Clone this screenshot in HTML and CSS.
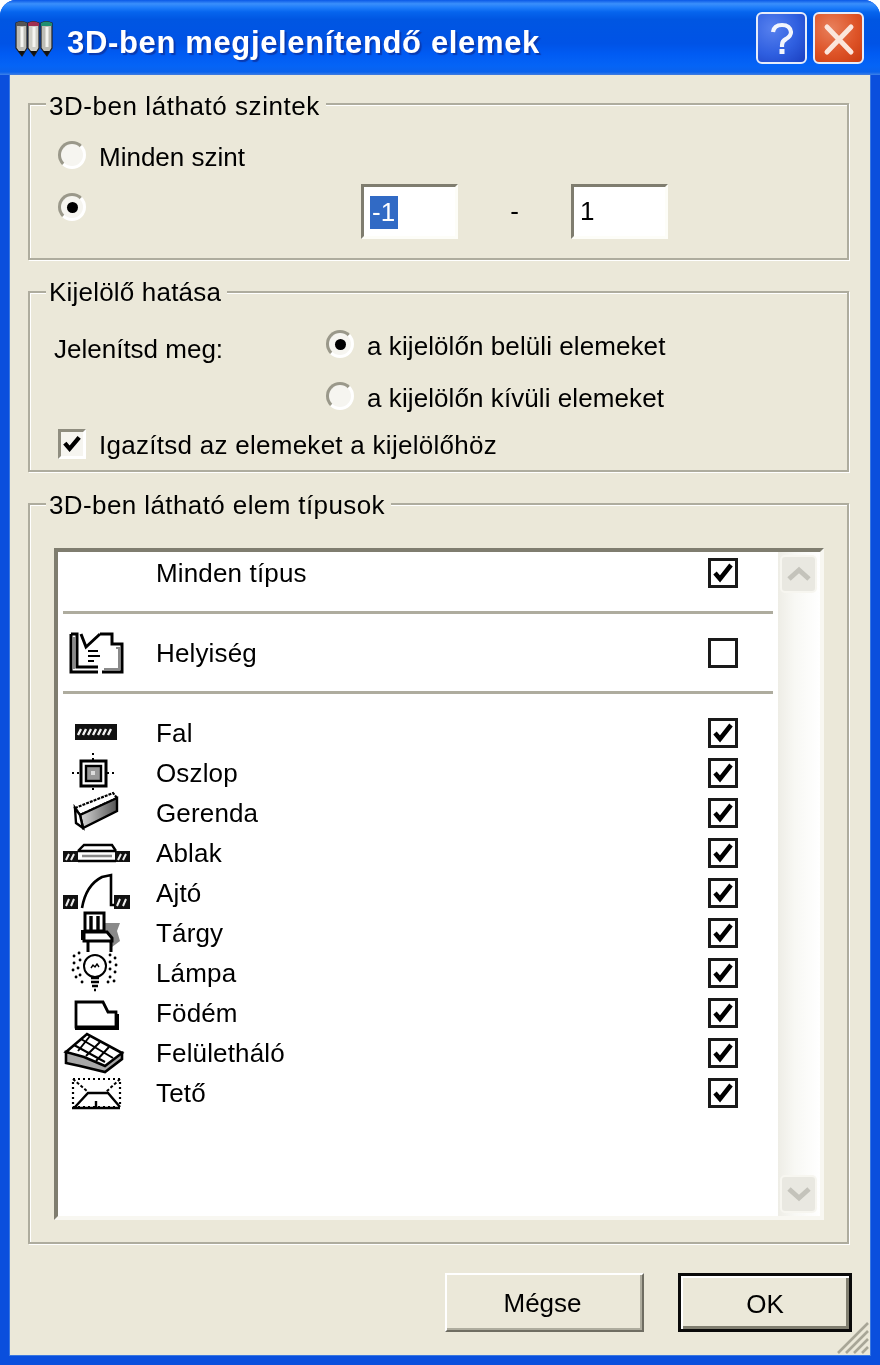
FILE: index.html
```html
<!DOCTYPE html>
<html lang="hu">
<head>
<meta charset="utf-8">
<title>3D-ben megjelenítendő elemek</title>
<link rel="stylesheet" href="styles.css">
</head>
<body>
<div class="window">
  <header class="titlebar">
    <svg class="app-icon" width="38" height="38" viewBox="0 0 38 38">
      <g stroke="#222" stroke-width="1.2">
        <path d="M1 3q5-3 11 0v25l-5 8-6-8z" fill="#bdbdb6"/>
        <path d="M13 3q5-3 11 0v25l-5 8-6-8z" fill="#cfcfc8"/>
        <path d="M26 3q5-3 11 0v25l-5 8-6-8z" fill="#bdbdb6"/>
      </g>
      <path d="M1 3q5-3 11 0v3H1z" fill="#555"/><path d="M13 3q5-3 11 0v3H13z" fill="#a03050"/><path d="M26 3q5-3 11 0v3H26z" fill="#208f70"/>
      <path d="M3 31l4 5 3-5z" fill="#111"/><path d="M15 31l4 5 3-5z" fill="#111"/><path d="M28 31l4 5 3-5z" fill="#111"/>
      <path d="M7 7v20M19 7v20M32 7v20" stroke="#f4f4f0" stroke-width="3"/>
    </svg>
    <h1 class="title">3D-ben megjelenítendő elemek</h1>
    <div class="win-btn help"><svg width="51" height="52" viewBox="0 0 51 52"><path d="M17 20q1-7 9-7t9 7q0 4-5 7-4 2-4 6v2" fill="none" stroke="#f2f5fd" stroke-width="4.2"/><rect x="23.5" y="37" width="5" height="5" fill="#f2f5fd"/></svg></div>
    <div class="win-btn close"><svg width="51" height="52" viewBox="0 0 51 52"><path d="M14 15l24 25M38 15L14 40" stroke="#fbe6dc" stroke-width="5" stroke-linecap="round"/></svg></div>
  </header>
  <main class="client">
    <section class="group g1">
      <div class="legend">3D-ben látható szintek</div>
      <div class="line r1"><span class="radio"></span><span class="label">Minden szint</span></div>
      <div class="line r2">
        <span class="radio on"></span>
        <div class="field f1"><span class="sel">-1</span></div>
        <span class="dash">-</span>
        <div class="field">1</div>
      </div>
    </section>
    <section class="group g2">
      <div class="legend">Kijelölő hatása</div>
      <div class="line k1"><span class="show">Jelenítsd meg:</span><span class="radio on"></span><span class="label">a kijelölőn belüli elemeket</span></div>
      <div class="line k2"><span class="show"></span><span class="radio"></span><span class="label">a kijelölőn kívüli elemeket</span></div>
      <div class="line k3"><span class="sunken-check"><svg width="23" height="23" viewBox="0 0 23 23"><path d="M4 11l5 6L19 5" fill="none" stroke="#000" stroke-width="4.5"/></svg></span><span class="label">Igazítsd az elemeket a kijelölőhöz</span></div>
    </section>
    <section class="group g3">
      <div class="legend">3D-ben látható elem típusok</div>
      <div class="listbox">
        <div class="list">
          <div class="row"><span class="ico"></span><span class="name">Minden típus</span><span class="cb checked"><svg width="24" height="24" viewBox="0 0 24 24"><path d="M4 12l5 6L20 4" fill="none" stroke="#000" stroke-width="4.5"/></svg></span></div>
          <hr class="sep">
          <div class="row"><span class="ico"><svg width="70" height="44" viewBox="0 0 70 44"><path d="M11 3h6v33h21M40 3h12v10h10v28H42M11 3v38h27M21 3l5 13L40 3" fill="none" stroke="#000" stroke-width="3"/><path d="M14 6v32M56 17h3v21H44" fill="none" stroke="#8a8a8a" stroke-width="2"/><path d="M28 20h10M28 25h12M28 30h6" stroke="#000" stroke-width="1.8"/></svg></span><span class="name">Helyiség</span><span class="cb"></span></div>
          <hr class="sep">
          <div class="row"><span class="ico"><svg width="70" height="44" viewBox="0 0 70 44"><rect x="15" y="13" width="42" height="16" fill="#111"/><path d="M18 24l3-6M23 24l3-6M28 24l3-6M33 24l3-6M38 24l3-6M43 24l3-6M48 24l3-6" stroke="#eee" stroke-width="2.4"/></svg></span><span class="name">Fal</span><span class="cb checked"><svg width="24" height="24" viewBox="0 0 24 24"><path d="M4 12l5 6L20 4" fill="none" stroke="#000" stroke-width="4.5"/></svg></span></div>
          <div class="row"><span class="ico"><svg width="70" height="44" viewBox="0 0 70 44"><path d="M12 22h43M33 2v37" stroke="#000" stroke-width="2" stroke-dasharray="2 3"/><rect x="21" y="10" width="25" height="25" fill="#fff" stroke="#000" stroke-width="3"/><rect x="26" y="15" width="15" height="15" fill="#999" stroke="#000" stroke-width="2.4"/><rect x="31" y="20" width="4" height="4" fill="#ddd"/></svg></span><span class="name">Oszlop</span><span class="cb checked"><svg width="24" height="24" viewBox="0 0 24 24"><path d="M4 12l5 6L20 4" fill="none" stroke="#000" stroke-width="4.5"/></svg></span></div>
          <div class="row"><span class="ico"><svg width="70" height="44" viewBox="0 0 70 44"><defs><linearGradient id="beam" x1="0" y1="0" x2="1" y2="0"><stop offset="0" stop-color="#d8d8d8"/><stop offset="1" stop-color="#555"/></linearGradient></defs><path d="M15 17L53 2l4 5-37 17z" fill="#fff" stroke="#000" stroke-width="2.2" stroke-dasharray="3 1"/><path d="M20 24L57 7v13L23 37z" fill="url(#beam)" stroke="#000" stroke-width="2.4"/><path d="M15 17l5 7 3 13-7-5z" fill="#fff" stroke="#000" stroke-width="2.4"/></svg></span><span class="name">Gerenda</span><span class="cb checked"><svg width="24" height="24" viewBox="0 0 24 24"><path d="M4 12l5 6L20 4" fill="none" stroke="#000" stroke-width="4.5"/></svg></span></div>
          <div class="row"><span class="ico"><svg width="70" height="44" viewBox="0 0 70 44"><rect x="3" y="20" width="15" height="11" fill="#111"/><rect x="55" y="20" width="15" height="11" fill="#111"/><path d="M6 29l3-6M11 29l3-6M58 29l3-6M63 29l3-6" stroke="#eee" stroke-width="2"/><path d="M18 20l6-6h28l4 6M18 20h38M18 30h38" fill="none" stroke="#000" stroke-width="2.4"/><path d="M22 25h30" stroke="#888" stroke-width="2.4"/></svg></span><span class="name">Ablak</span><span class="cb checked"><svg width="24" height="24" viewBox="0 0 24 24"><path d="M4 12l5 6L20 4" fill="none" stroke="#000" stroke-width="4.5"/></svg></span></div>
          <div class="row"><span class="ico"><svg width="70" height="44" viewBox="0 0 70 44"><rect x="3" y="24" width="15" height="14" fill="#111"/><rect x="54" y="24" width="16" height="14" fill="#111"/><path d="M6 35l3-7M11 35l3-7M57 35l3-7M63 35l3-7" stroke="#eee" stroke-width="2"/><path d="M22 37Q26 14 42 6l9-2v30h4" fill="none" stroke="#000" stroke-width="2.6"/></svg></span><span class="name">Ajtó</span><span class="cb checked"><svg width="24" height="24" viewBox="0 0 24 24"><path d="M4 12l5 6L20 4" fill="none" stroke="#000" stroke-width="4.5"/></svg></span></div>
          <div class="row"><span class="ico"><svg width="70" height="44" viewBox="0 0 70 44"><path d="M44 12h16l-3 8 3 10-8 6-8-14z" fill="#8a8a8a"/><path d="M25 2h19v18H25z" fill="#fff" stroke="#000" stroke-width="3"/><path d="M31 5v14M38 5v14" stroke="#000" stroke-width="3.4"/><path d="M24 21h23l5 6v3H24z" fill="#fff" stroke="#000" stroke-width="3"/><path d="M23 19v10" stroke="#000" stroke-width="4"/><path d="M28 30v11M51 30v11" stroke="#000" stroke-width="3"/></svg></span><span class="name">Tárgy</span><span class="cb checked"><svg width="24" height="24" viewBox="0 0 24 24"><path d="M4 12l5 6L20 4" fill="none" stroke="#000" stroke-width="4.5"/></svg></span></div>
          <div class="row"><span class="ico"><svg width="70" height="44" viewBox="0 0 70 44"><circle cx="35" cy="15" r="11" fill="#fff" stroke="#000" stroke-width="2"/><path d="M31 17l2-3 2 2 2-3 2 3" fill="none" stroke="#000" stroke-width="1.4"/><path d="M31 27h8M31 31h8M32 35h6M34 39h2" stroke="#000" stroke-width="2.6"/><path d="M14 5h.1M19 2h.1M14 12h.1M20 9h.1M13 19h.1M18 17h.1M16 26h.1M20 24h.1M22 31h.1M50 4h.1M55 7h.1M50 11h.1M56 14h.1M50 18h.1M55 21h.1M50 26h.1M54 30h.1M48 31h.1" stroke="#000" stroke-width="2.8" stroke-linecap="round"/></svg></span><span class="name">Lámpa</span><span class="cb checked"><svg width="24" height="24" viewBox="0 0 24 24"><path d="M4 12l5 6L20 4" fill="none" stroke="#000" stroke-width="4.5"/></svg></span></div>
          <div class="row"><span class="ico"><svg width="70" height="44" viewBox="0 0 70 44"><path d="M16 11h27l5 10h8v15H16z" fill="#fff" stroke="#000" stroke-width="2.8"/><path d="M15 37h42V23" fill="none" stroke="#000" stroke-width="4"/></svg></span><span class="name">Födém</span><span class="cb checked"><svg width="24" height="24" viewBox="0 0 24 24"><path d="M4 12l5 6L20 4" fill="none" stroke="#000" stroke-width="4.5"/></svg></span></div>
          <div class="row"><span class="ico"><svg width="70" height="44" viewBox="0 0 70 44"><path d="M6 21v11l14 3 25 6 17-13v-6L45 29 24 23z" fill="#a8a8a8" stroke="#000" stroke-width="2.6"/><path d="M6 21L27 3l35 19-17 13-21-9z" fill="#fff" stroke="#000" stroke-width="2.6"/><path d="M14 14l31 17M21 8l32 19M30 5L18 20M40 11L26 25M49 16L36 30" stroke="#000" stroke-width="2"/></svg></span><span class="name">Felületháló</span><span class="cb checked"><svg width="24" height="24" viewBox="0 0 24 24"><path d="M4 12l5 6L20 4" fill="none" stroke="#000" stroke-width="4.5"/></svg></span></div>
          <div class="row"><span class="ico"><svg width="70" height="44" viewBox="0 0 70 44"><rect x="13" y="8" width="47" height="28" fill="none" stroke="#000" stroke-width="2.2" stroke-dasharray="2 3"/><path d="M13 8l15 13M60 8L46 21" stroke="#000" stroke-width="2" stroke-dasharray="3 2"/><path d="M12 37h48M15 36l13-14h20l12 14M36 30v6" fill="none" stroke="#000" stroke-width="2.4"/></svg></span><span class="name">Tető</span><span class="cb checked"><svg width="24" height="24" viewBox="0 0 24 24"><path d="M4 12l5 6L20 4" fill="none" stroke="#000" stroke-width="4.5"/></svg></span></div>
        </div>
        <div class="scrollbar">
          <div class="sb-btn"><svg width="26" height="16" viewBox="0 0 26 16"><path d="M3 13L13 4l10 9" fill="none" stroke="#c4c3bb" stroke-width="5"/></svg></div>
          <div class="sb-btn"><svg width="26" height="16" viewBox="0 0 26 16"><path d="M3 3l10 9 10-9" fill="none" stroke="#c4c3bb" stroke-width="5"/></svg></div>
        </div>
      </div>
    </section>
    <footer class="actions">
      <div class="btn cancel">Mégse</div>
      <div class="btn ok">OK</div>
    </footer>
    <svg class="grip" width="36" height="36" viewBox="0 0 36 36"><path d="M34 4L4 34M34 12L12 34M34 20L20 34M34 28l-6 6" stroke="#a8a697" stroke-width="2.6"/></svg>
  </main>
</div>
</body>
</html>
```
FILE: styles.css
```css
* { box-sizing: border-box; }
html, body { margin: 0; padding: 0; background: #fff; }
body {
  width: 880px;
  height: 1365px;
  overflow: hidden;
  font-family: "Liberation Sans", Arial, sans-serif;
  font-size: 26px;
  line-height: 30px;
  color: #000;
  filter: blur(0.45px);
}
.window {
  width: 880px;
  height: 1365px;
  display: flex;
  flex-direction: column;
  border-radius: 16px 16px 0 0;
  overflow: hidden;
  background: #0a4fdd;
}
.titlebar {
  height: 75px;
  flex: none;
  display: flex;
  align-items: center;
  padding: 0 16px 0 15px;
  background: linear-gradient(180deg, #0a58e6 0, #3a8ffb 5%, #1f7dfa 10%, #0665ee 16%, #0056e2 26%, #0053e6 58%, #005bf3 72%, #0564f6 88%, #0a62ec 96%, #3f82e8 100%);
}
.app-icon { flex: none; margin-top: 2px; }
.title {
  flex: 1;
  margin: 10px 0 0 14px;
  font: bold 31px/40px "Liberation Sans", sans-serif;
  color: #fff;
  letter-spacing: 0.65px;
  text-shadow: 2px 2px 1px #0a3ab0;
}
.win-btn {
  width: 51px;
  height: 52px;
  border: 2px solid #e6ecfa;
  border-radius: 6px;
  display: flex;
  align-items: center;
  justify-content: center;
  margin-left: 6px;
  flex: none;
}
.win-btn svg { flex: none; }
.help { background: radial-gradient(circle at 30% 30%, #5680ee 0, #2f5fe0 55%, #1a3fc0 100%); }
.close { background: radial-gradient(circle at 35% 30%, #e8805c 0, #de5428 55%, #c93a10 100%); }
.client {
  flex: 1;
  position: relative;
  margin: 0 10px 10px;
  padding: 28px 21px 0 18px;
  background: #ebe8d9;
  display: flex;
  flex-direction: column;
  box-shadow: 0 0 0 1px #3a78e0;
}
.group {
  flex: none;
  border: 2px solid #aeac9e;
  box-shadow: 1px 1px 0 #fff, inset 1px 1px 0 #fff;
  margin-bottom: 31px;
}
.g1 { height: 157px; padding: 0 0 0 28px; }
.g2 { height: 181px; padding: 0 0 0 24px; }
.g3 { height: 741px; padding: 0 0 0 24px; margin-bottom: 0; }
.legend {
  width: fit-content;
  height: 30px;
  padding: 0 6px 0 3px;
  background: #ebe8d9;
  white-space: nowrap;
}
.g1 .legend { margin: -14px 0 0 -12px; letter-spacing: 0.55px; }
.g2 .legend { margin: -16px 0 0 -8px; letter-spacing: 0.2px; }
.g3 .legend { margin: -15px 0 0 -8px; letter-spacing: 0.4px; }
.line { display: flex; align-items: center; height: 30px; }
.r1 { margin-top: 20px; }
.r1 .label { padding-top: 2px; }
.r1 .radio { margin-bottom: 2px; }
.r2 { height: 55px; margin-top: 13px; align-items: flex-start; }
.r2 .radio { margin: 9px 275px 0 0; }
.label { margin-left: 13px; white-space: nowrap; }
.k1 .label, .k2 .label { letter-spacing: 0.08px; }
.k3 .label { letter-spacing: 0.27px; }
.radio {
  flex: none;
  width: 28px;
  height: 28px;
  border-radius: 50%;
  border: 3px solid;
  border-color: #9a988a #fff #fff #9a988a;
  background: #f6f5f0;
  display: flex;
  align-items: center;
  justify-content: center;
}
.radio.on::after {
  content: "";
  width: 11px;
  height: 11px;
  border-radius: 50%;
  background: #000;
}
.field {
  width: 97px;
  height: 55px;
  flex: none;
  background: #fff;
  border: 3px solid;
  border-color: #7f7d6f #fdfdf8 #fdfdf8 #7f7d6f;
  padding: 9px 0 0 6px;
}
.sel {
  display: inline-block;
  width: 28px;
  height: 33px;
  line-height: 33px;
  background: #316ac5;
  color: #fff;
  padding-left: 2px;
}
.dash { width: 113px; flex: none; text-align: center; padding-top: 12px; }
.k1 { margin-top: 24px; }
.k1 .radio, .k2 .radio { margin-bottom: 4px; }
.k2 { margin-top: 22px; }
.k3 { margin-top: 17px; padding-left: 4px; }
.show { width: 272px; flex: none; padding-top: 6px; }
.sunken-check {
  width: 28px;
  height: 30px;
  flex: none;
  margin-bottom: 3px;
  border: 3px solid;
  border-color: #8f8d7f #fff #fff #8f8d7f;
  background: #f6f5f0;
  display: flex;
  align-items: center;
  justify-content: center;
}
.listbox {
  width: 770px;
  height: 672px;
  margin-top: 28px;
  display: flex;
  border: 4px solid;
  border-color: #7f7d6f #f8f7f1 #f8f7f1 #7f7d6f;
  background: #fff;
}
.list { width: 720px; flex: none; padding: 1px 0 0 5px; }
.row { height: 40px; display: flex; align-items: center; }
.ico { width: 96px; flex: none; height: 40px; display: flex; align-items: center; margin-left: -3px; }
.ico svg { flex: none; margin: -2px 0; }
.name { width: 552px; flex: none; letter-spacing: 0.15px; }
.cb {
  width: 30px;
  height: 30px;
  flex: none;
  border: 3px solid #1a1a1a;
  background: #fff;
  display: flex;
  align-items: center;
  justify-content: center;
}
.sep {
  width: 710px;
  height: 3px;
  margin: 18px 0 19px;
  border: 0;
  background: #aeac9e;
}
.scrollbar {
  width: 42px;
  flex: none;
  padding: 3px 3px 3px 2px;
  display: flex;
  flex-direction: column;
  justify-content: space-between;
  background: linear-gradient(90deg, #eeede6 0, #f8f8f4 40%, #fff 100%);
}
.sb-btn {
  height: 38px;
  border: 2px solid #f7f6f0;
  border-radius: 5px;
  background: #e9e8e1;
  display: flex;
  align-items: center;
  justify-content: center;
}
.actions {
  display: flex;
  margin-top: 29px;
  margin-right: -3px;
  justify-content: flex-end;
  gap: 34px;
}
.btn {
  height: 59px;
  line-height: 57px;
  text-align: center;
  background: #ebe8d9;
}
.cancel {
  width: 199px;
  padding-right: 4px;
  border: 2px solid;
  border-color: #fff #6f6d62 #6f6d62 #fff;
  box-shadow: inset -2px -2px 0 #aeac9e;
}
.ok {
  width: 174px;
  border: 3px solid #0a0a0a;
  box-shadow: inset 2px 2px 0 #fff, inset -3px -3px 0 #807e70;
}
.grip { position: absolute; right: 0; bottom: 0; }
```
